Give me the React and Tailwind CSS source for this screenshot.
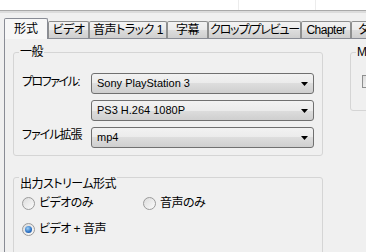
import React from 'react';

const font = "font-['Liberation_Sans','Noto_Sans_CJK_JP',sans-serif] [font-feature-settings:'palt']";

const tabs = [
  { label: 'ビデオ', w: 'w-[41px]', t: 'tracking-[-0.5px]' },
  { label: '音声トラック 1', w: 'w-[78px]', t: 'tracking-[-0.5px]' },
  { label: '字幕', w: 'w-[41px]', t: 'tracking-[-0.5px]' },
  { label: 'クロップ/プレビュー', w: 'w-[93px]', t: 'tracking-[-1.2px]' },
  { label: 'Chapter', w: 'w-[50px]', t: 'tracking-[-0.5px]' },
  { label: 'タイトル', w: 'w-[54px]', t: 'tracking-[-0.5px]' },
];

function Combo({ value }) {
  return (
    <div className="h-[21px] flex items-center justify-between rounded-[3px] border border-[#707070] bg-[linear-gradient(#f2f2f2,#ebebeb_50%,#dddddd_50%,#cfcfcf)] pl-[5px] pr-[5px]">
      <span className="text-[11px] leading-[13px]">{value}</span>
      <svg width="7" height="4" viewBox="0 0 7 4">
        <path d="M0 0h7L3.5 4z" fill="#000" />
      </svg>
    </div>
  );
}

function Radio({ checked, label }) {
  return (
    <div className="flex items-center gap-[4px] h-[14px]">
      <div className="w-[13px] h-[13px] rounded-full border border-[#9a9a9a] bg-[linear-gradient(135deg,#dcdcdc,#fbfbfb)] flex items-center justify-center">
        {checked && (
          <div className="w-[7px] h-[7px] rounded-full bg-[radial-gradient(circle_at_40%_35%,#9fd2f7,#2a6fc2_60%,#1b4a8c)]" />
        )}
      </div>
      <span className="text-[12px] leading-[14px] tracking-[-0.5px]">{label}</span>
    </div>
  );
}

function GroupBox({ label, className, boxClass, children }) {
  return (
    <div className={`relative shrink-0 ${className}`}>
      <div className={`mt-[7px] border border-[#d5d5d5] rounded-[3px] ${boxClass}`}>{children}</div>
      <span className="absolute top-0 left-[6px] px-[1px] bg-[#f0f0f0] text-[12px] leading-[14px] whitespace-nowrap tracking-[-0.5px]">
        {label}
      </span>
    </div>
  );
}

export default function App() {
  return (
    <div className={`w-[366px] h-[252px] overflow-hidden bg-[#f0f0f0] text-black ${font}`}>
      {/* list above the tabs */}
      <div className="h-[11px] bg-white border-b border-[#a9a9a9] flex">
        <div className="w-[239px] border-r border-[#ececec]" />
        <div className="w-[77px] border-r border-[#ececec]" />
      </div>
      <div className="h-[2px] bg-[#dcdcdc]" />

      {/* tabs */}
      <div className="mt-[5px] pl-[4px] h-[20px] flex items-start relative z-10 whitespace-nowrap">
        <div className="w-[44px] shrink-0 h-[21px] border border-b-0 border-[#898c95] rounded-t-[2px] bg-[#f7f7f7] flex justify-center pt-[3px] text-[12px] leading-[14px]">
          形式
        </div>
        {tabs.map(t => (
          <div
            key={t.label}
            className={`${t.w} ${t.t} shrink-0 mt-[3px] h-[17px] border border-b-0 border-[#8e8f8f] rounded-t-[2px] bg-[linear-gradient(#f2f2f2,#ebebeb_50%,#dddddd_50%,#cfcfcf)] flex justify-center pt-[1px] text-[12px] leading-[14px] overflow-hidden`}
          >
            {t.label}
          </div>
        ))}
      </div>

      {/* tab page */}
      <div className="ml-[4px] h-[220px] border-l border-t border-[#898c95] bg-[#f0f0f0] pl-[8px] pt-[6px]">
        <div className="flex gap-[27px]">
          <GroupBox label="一般" className="w-[310px]" boxClass="h-[104px] px-[8px] pt-[20px]">
            <div className="flex flex-col gap-[6px]">
              <div className="flex items-start">
                <div className="w-[69px] pt-[2px] text-[12px] leading-[14px] tracking-[-1.5px]">プロファイル:</div>
                <div className="flex-1"><Combo value="Sony PlayStation 3" /></div>
              </div>
              <div className="flex items-start">
                <div className="w-[69px]" />
                <div className="flex-1"><Combo value="PS3 H.264 1080P" /></div>
              </div>
              <div className="flex items-start">
                <div className="w-[69px] pt-[1px] text-[12px] leading-[14px] tracking-[-1px]">ファイル拡張</div>
                <div className="flex-1"><Combo value="mp4" /></div>
              </div>
            </div>
          </GroupBox>

          <GroupBox label="Mi" className="w-[80px]" boxClass="h-[59px] pl-[11px] pt-[22px]">
            <div className="w-[13px] h-[13px] border border-[#8e8f8f] bg-[linear-gradient(135deg,#dcdcdc,#fbfbfb)]" />
          </GroupBox>
        </div>

        <GroupBox label="出力ストリーム形式" className="mt-[21px] w-[310px]" boxClass="h-[100px] pl-[8px] pt-[18px]">
          <div className="flex flex-col gap-[12px]">
            <div className="flex">
              <div className="w-[121px]"><Radio label="ビデオのみ" /></div>
              <Radio label="音声のみ" />
            </div>
            <Radio checked label="ビデオ + 音声" />
          </div>
        </GroupBox>
      </div>
    </div>
  );
}
